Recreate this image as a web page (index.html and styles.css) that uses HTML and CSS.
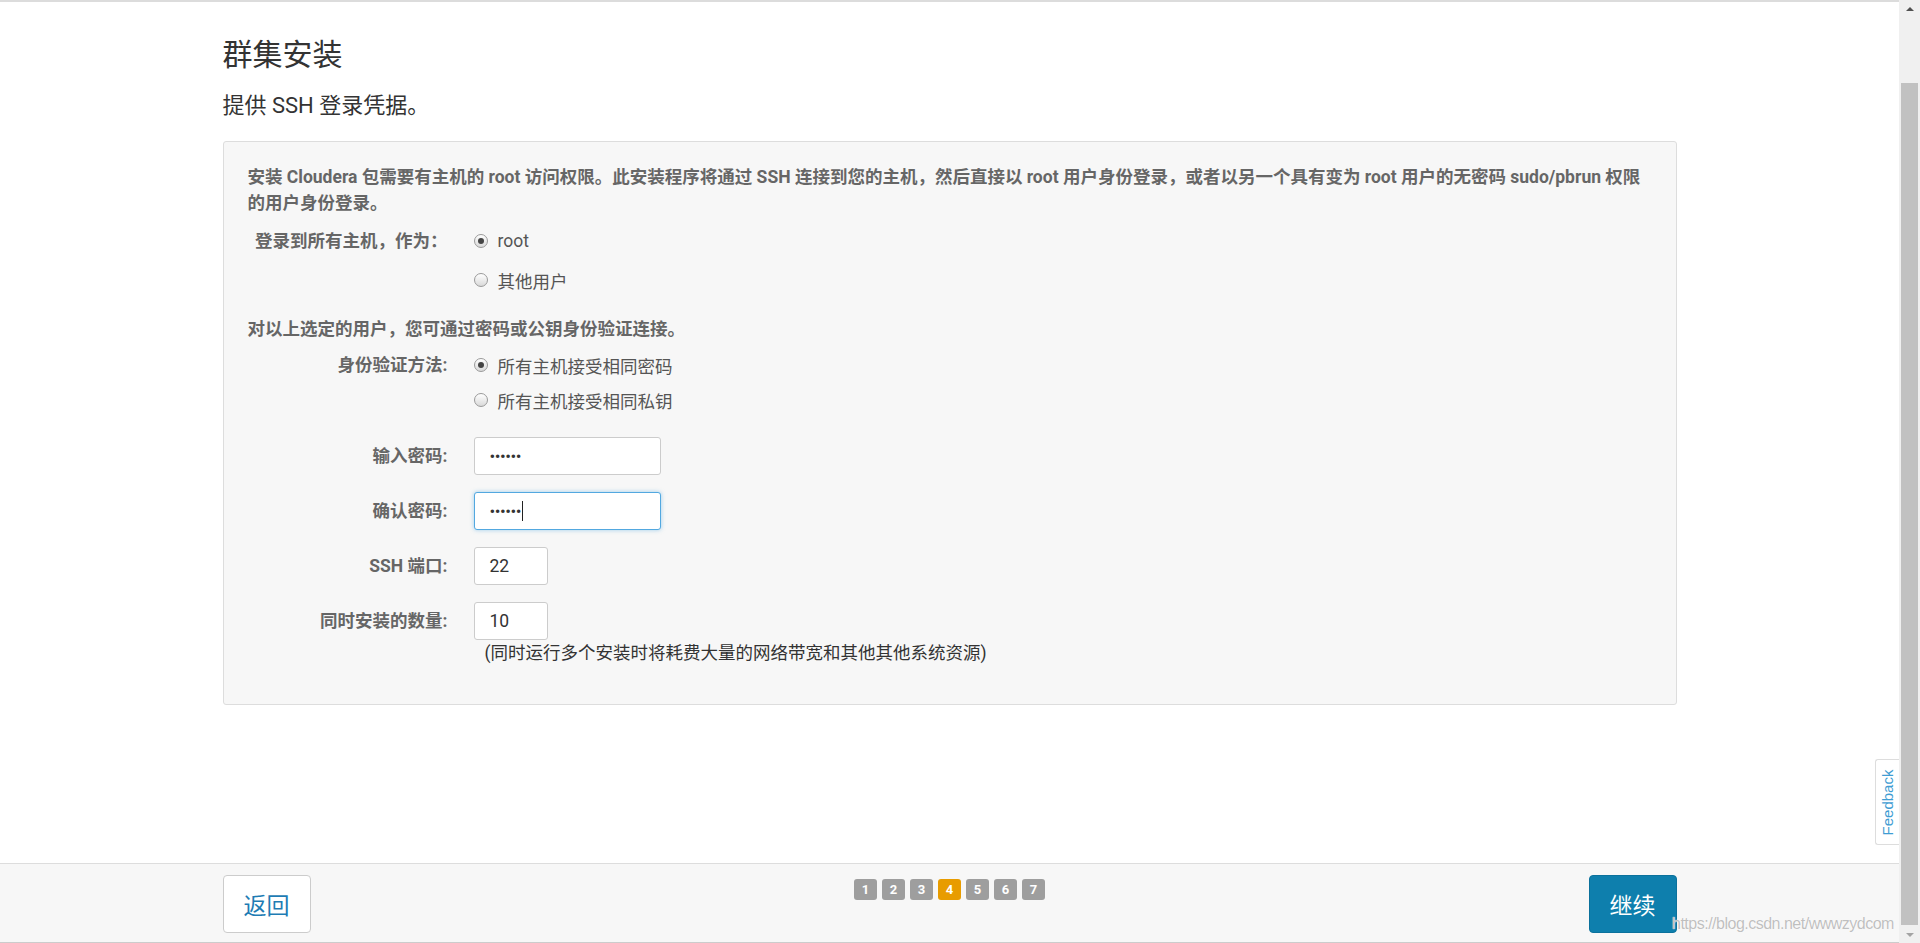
FILE: index.html
```html
<!DOCTYPE html>
<html lang="zh-CN">
<head>
<meta charset="utf-8">
<title>群集安装</title>
<link rel="stylesheet" href="styles.css">
</head>
<body>
<div class="window">
  <div class="viewport">
    <div class="topline"></div>
    <main class="content">
      <div class="container">
        <h1 class="title">群集安装</h1>
        <p class="subtitle">提供 SSH 登录凭据。</p>
        <div class="panel">
          <p class="intro">安装 Cloudera 包需要有主机的 root 访问权限。此安装程序将通过 SSH 连接到您的主机，然后直接以 root 用户身份登录，或者以另一个具有变为 root 用户的无密码 sudo/pbrun 权限的用户身份登录。</p>
          <div class="form-row row-login">
            <div class="label">登录到所有主机，作为：</div>
            <div class="controls">
              <div class="radio"><span class="radio-dot checked"></span>root</div>
              <div class="radio"><span class="radio-dot"></span>其他用户</div>
            </div>
          </div>
          <p class="intro intro-2">对以上选定的用户，您可通过密码或公钥身份验证连接。</p>
          <div class="form-row row-auth">
            <div class="label">身份验证方法:</div>
            <div class="controls controls-tight">
              <div class="radio"><span class="radio-dot checked"></span>所有主机接受相同密码</div>
              <div class="radio"><span class="radio-dot"></span>所有主机接受相同私钥</div>
            </div>
          </div>
          <div class="fields">
            <div class="form-row field">
              <div class="label">输入密码:</div>
              <div class="input input-wide"><span class="dots">••••••</span></div>
            </div>
            <div class="form-row field">
              <div class="label">确认密码:</div>
              <div class="input input-wide focused"><span class="dots">••••••</span><span class="caret"></span></div>
            </div>
            <div class="form-row field">
              <div class="label">SSH 端口:</div>
              <div class="input input-small">22</div>
            </div>
            <div class="form-row field">
              <div class="label">同时安装的数量:</div>
              <div class="input input-small">10</div>
            </div>
          </div>
          <p class="note">(同时运行多个安装时将耗费大量的网络带宽和其他其他系统资源)</p>
        </div>
      </div>
    </main>
    <footer class="footer">
      <div class="container footer-inner">
        <button class="btn btn-back">返回</button>
        <div class="pager">
          <span class="page">1</span>
          <span class="page">2</span>
          <span class="page">3</span>
          <span class="page active">4</span>
          <span class="page">5</span>
          <span class="page">6</span>
          <span class="page">7</span>
        </div>
        <button class="btn btn-primary">继续</button>
      </div>
    </footer>
    <div class="feedback"><span class="feedback-text">Feedback</span></div>
    <div class="watermark">https://blog.csdn.net/wwwzydcom</div>
  </div>
  <div class="scrollbar">
    <div class="sb-arrow sb-up"><span class="tri-up"></span></div>
    <div class="sb-track"><div class="sb-thumb"></div></div>
    <div class="sb-arrow sb-down"><span class="tri-down"></span></div>
  </div>
</div>
</body>
</html>
```
FILE: styles.css
```css
* { box-sizing: border-box; }
html, body { margin: 0; padding: 0; height: 100%; overflow: hidden; }
body {
  font-family: Roboto, "Noto Sans CJK SC", sans-serif;
  color: #333;
  background: #fff;
  font-size: 17.5px;
}
.window { display: flex; height: 943px; }
.viewport {
  flex: 1;
  min-width: 0;
  display: flex;
  flex-direction: column;
  position: relative;
}
.topline { height: 2px; background: #dcdcdc; flex: none; }
.content { flex: 1; }
.container { width: 1454px; margin: 0 auto; }

.title {
  margin: 0;
  padding-top: 35px;
  font-size: 30px;
  line-height: 36px;
  font-weight: 400;
  color: #333;
}
.subtitle {
  margin: 19px 0 0;
  font-size: 22px;
  line-height: 28px;
  color: #333;
}
.panel {
  margin-top: 21px;
  background: #f7f7f7;
  border: 1px solid #dddddd;
  border-radius: 3px;
  padding: 22px 24px 38px;
}
.intro {
  margin: 0;
  font-weight: 700;
  color: #666;
  line-height: 26px;
}
.intro-2 { margin-top: 23px; }

.form-row { display: flex; }
.row-login { margin-top: 12px; }
.row-auth { margin-top: 10px; }
.label {
  flex: none;
  width: 200px;
  margin-right: 26px;
  text-align: right;
  font-weight: 700;
  color: #666;
  line-height: 26px;
}
.controls { display: flex; flex-direction: column; gap: 13px; }
.controls-tight { gap: 9px; }
.radio {
  display: flex;
  align-items: center;
  height: 26px;
  color: #555;
}
.radio-dot {
  width: 14px;
  height: 14px;
  border-radius: 50%;
  border: 1px solid #9a9a9a;
  background: linear-gradient(#ffffff, #d9d9d9);
  margin-right: 10px;
  display: flex;
  align-items: center;
  justify-content: center;
}
.radio-dot.checked::after {
  content: "";
  width: 6px;
  height: 6px;
  border-radius: 50%;
  background: #444;
}

.fields { margin-top: 24px; display: flex; flex-direction: column; gap: 17px; }
.field { align-items: center; }
.input {
  height: 38px;
  background: #fff;
  border: 1px solid #cccccc;
  border-radius: 3px;
  padding-left: 15px;
  display: flex;
  align-items: center;
  color: #333;
  font-size: 17.5px;
}
.input-wide { width: 187px; }
.input-small { width: 74px; }
.input.focused {
  border-color: #52a8e0;
  box-shadow: 0 0 4px rgba(82, 168, 224, 0.55);
}
.dots { font-size: 17px; letter-spacing: -0.5px; color: #333; }
.caret { width: 1px; height: 20px; background: #222; margin-left: 1px; }

.note {
  margin: 0 0 0 237px;
  line-height: 26px;
  color: #333;
}

.footer {
  flex: none;
  height: 80px;
  background: #f7f7f7;
  border-top: 1px solid #dddddd;
  border-bottom: 1px solid #cccccc;
}
.footer-inner {
  display: flex;
  justify-content: space-between;
  align-items: flex-start;
  padding-top: 11px;
}
.btn {
  width: 88px;
  height: 58px;
  border-radius: 4px;
  font-family: "Noto Sans CJK SC", sans-serif;
  font-size: 23px;
  cursor: pointer;
  padding: 0;
}
.btn-back { background: #fff; border: 1px solid #cccccc; color: #1e7cb4; }
.btn-primary { background: #0e7fad; border: 1px solid #0b719c; color: #fff; }
.pager { display: flex; gap: 5px; margin-top: 4px; }
.page {
  width: 23px;
  height: 21px;
  border-radius: 3px;
  background: #9e9e9e;
  color: #fff;
  font-family: Roboto, sans-serif;
  font-weight: 700;
  font-size: 13px;
  display: flex;
  align-items: center;
  justify-content: center;
}
.page.active { background: #e89c00; }

.feedback {
  position: absolute;
  right: 0;
  top: 759px;
  width: 24px;
  height: 86px;
  background: #fff;
  border: 1px solid #dddddd;
  border-right: none;
  border-radius: 3px 0 0 3px;
  display: flex;
  align-items: center;
  justify-content: center;
}
.feedback-text {
  transform: rotate(-90deg);
  font-family: "Liberation Sans", Arial, sans-serif;
  font-size: 15px;
  color: #3f9dd3;
  white-space: nowrap;
}
.watermark {
  position: absolute;
  left: 1672px;
  top: 915px;
  z-index: 2;
  font-family: "Liberation Sans", Arial, sans-serif;
  font-size: 16px;
  letter-spacing: -0.5px;
  color: rgba(170, 170, 170, 0.75);
  white-space: nowrap;
  text-shadow: 0 0 1px #fff, 0 0 1px #fff;
}

.scrollbar {
  flex: none;
  width: 21px;
  background: #f0f0f0;
  display: flex;
  flex-direction: column;
}
.sb-arrow { height: 17px; display: flex; align-items: center; justify-content: center; flex: none; }
.sb-track { flex: 1; padding: 66px 2px 0; }
.sb-thumb { height: 842px; background: #c1c1c1; }
.tri-up {
  width: 0; height: 0;
  border-left: 4px solid transparent;
  border-right: 4px solid transparent;
  border-bottom: 4px solid #505050;
}
.tri-down {
  width: 0; height: 0;
  border-left: 4px solid transparent;
  border-right: 4px solid transparent;
  border-top: 4px solid #a3a3a3;
}
```
